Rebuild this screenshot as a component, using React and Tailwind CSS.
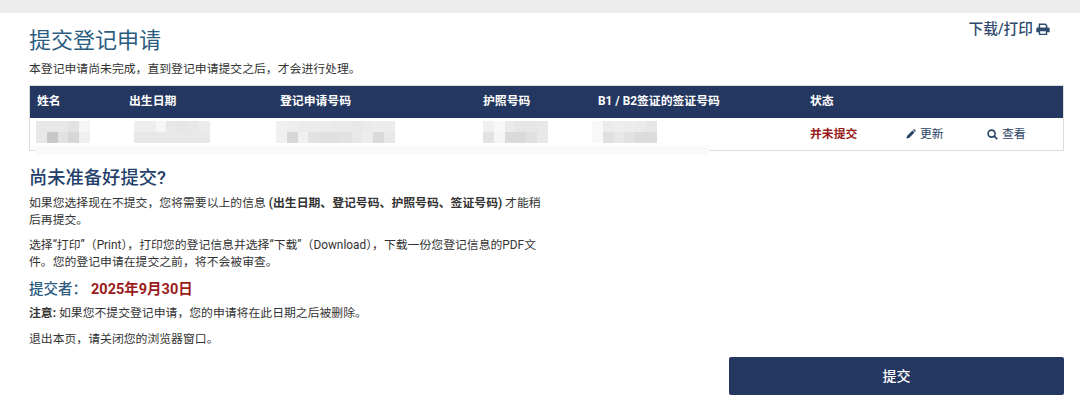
import React from "react";

function Mosaic({ rows, cell = 10.8 }) {
  return (
    <div className="flex flex-col">
      {rows.map((r, i) => (
        <div key={i} className="flex">
          {r.map((c, j) => (
            <div key={j} style={{ width: cell, height: 10.8, background: c }} />
          ))}
        </div>
      ))}
    </div>
  );
}

const PrintIcon = () => (
  <svg width="14" height="13" viewBox="0 0 14 13" fill="none" className="ml-[3px] mt-[1px]">
    <path d="M3.4 5V1.2h5.8L10.6 2.6V5" stroke="#2f4a6d" strokeWidth="1.5" />
    <path fillRule="evenodd" clipRule="evenodd" d="M1.6 4.6h10.8c.7 0 1.3.6 1.3 1.3v3.4H11.2V12H2.8V9.3H.3V5.9c0-.7.6-1.3 1.3-1.3zM4.2 8.2v2.5h5.6V8.2z" fill="#2f4a6d" />
  </svg>
);

const Pencil = () => (
  <svg width="10" height="10" viewBox="0 0 10 10" className="mr-[4px]">
    <path d="M0.4 9.6 1 6.9 6.4 1.5 8.5 3.6 3.1 9zM7 .9 7.6.4c.3-.3.7-.3 1 0l1 1c.3.3.3.7 0 1L9.1 3z" fill="#2a4365" />
  </svg>
);

const Search = () => (
  <svg width="11" height="11" viewBox="0 0 11 11" fill="none" className="mr-[4px]">
    <circle cx="4.6" cy="4.6" r="3.5" stroke="#2a4365" strokeWidth="1.6" />
    <path d="M7.2 7.2 10.2 10.2" stroke="#2a4365" strokeWidth="1.8" />
  </svg>
);

const g = (v) => `rgb(${v},${v},${v})`;
const rowsOf = (a) => a.map((r) => r.map(g));

export default function App() {
  return (
    <div
      className="w-[1080px] h-[419px] overflow-hidden bg-white text-[#333] [text-spacing-trim:space-all]"
      style={{ fontFamily: 'Roboto, "Noto Sans CJK SC", sans-serif' }}
    >
      <div className="h-[13px] bg-[#ececec]" />
      <div className="relative pl-[29px] pr-[16px]">
        <a className="absolute right-[30px] top-[7px] flex items-center text-[14.7px] leading-[18px] font-medium text-[#2f4a6d]">
          下载/打印
          <PrintIcon />
        </a>
        <h1 className="pt-[13px] text-[22px] leading-[30px] font-normal text-[#2b5c7f]">提交登记申请</h1>
        <p className="mt-[5px] text-[11.85px] leading-[16px]">本登记申请尚未完成，直到登记申请提交之后，才会进行处理。</p>

        <div className="relative mt-[8px] w-[1035px] border border-[#dcdcdc]">
          <div className="flex h-[32px] items-center bg-[#243760] pl-[7px] text-[11.85px] font-bold text-white">
            <div className="w-[92px]">姓名</div>
            <div className="w-[151px]">出生日期</div>
            <div className="w-[203px]">登记申请号码</div>
            <div className="w-[115px]">护照号码</div>
            <div className="w-[212px]">B1 / B2签证的签证号码</div>
            <div>状态</div>
          </div>
          <div className="flex h-[32px] items-center pl-[6px] text-[11.85px]">
            <div className="w-[98px] -mt-[4px]">
              <Mosaic rows={rowsOf([[232, 232, 232, 226, 245], [232, 200, 225, 215, 240]])} />
            </div>
            <div className="w-[142px] -mt-[4px]">
              <Mosaic rows={rowsOf([[238, 238, 246, 232, 230, 232, 236], [232, 232, 232, 232, 232, 232, 232]])} />
            </div>
            <div className="w-[207px] -mt-[4px]">
              <Mosaic rows={rowsOf([[240, 238, 236, 236, 236, 234, 234, 232, 234, 236, 236], [240, 215, 240, 226, 224, 224, 226, 232, 236, 218, 232]])} />
            </div>
            <div className="w-[109px] -mt-[4px]">
              <Mosaic rows={rowsOf([[240, 248, 234, 230, 230, 232], [226, 245, 218, 218, 224, 232]])} />
            </div>
            <div className="w-[218px] -mt-[4px]">
              <Mosaic rows={rowsOf([[248, 236, 238, 236, 234, 230], [248, 224, 232, 226, 220, 220]])} />
            </div>
            <div className="w-[96px] pt-[1px] font-bold text-[#9b1c1c]">并未提交</div>
            <div className="flex w-[81px] items-center pt-[1px] text-[#2a4365]"><Pencil />更新</div>
            <div className="flex items-center pt-[1px] text-[#2a4365]"><Search />查看</div>
          </div>
          <div className="absolute left-[5px] top-[59px] h-[10px] w-[675px] bg-[#fafafa]" />
        </div>

        <div className="w-[515px]">
          <h2 className="mt-[14px] text-[18.3px] leading-[26px] font-medium text-[#243f6b]">尚未准备好提交?</h2>
          <p className="mt-[4px] text-[11.85px] leading-[17px]">
            如果您选择现在不提交，您将需要以上的信息 <b>(出生日期、登记号码、护照号码、签证号码)</b> 才能稍后再提交。
          </p>
          <p className="mt-[8px] text-[11.85px] leading-[17px]">
            选择“打印”（Print<span className="[text-spacing-trim:normal]">），</span>打印您的登记信息并选择“下载”（Download<span className="[text-spacing-trim:normal]">），</span>下载一份您登记信息的PDF文件。您的登记申请在提交之前，将不会被审查。
          </p>
          <div className="mt-[9px] flex text-[14.5px] leading-[20px] font-medium text-[#2b5c7f]">
            提交者：<span className="ml-[4px] font-bold text-[#9b1c1c]">2025年9月30日</span>
          </div>
          <p className="mt-[5px] text-[11.85px] leading-[17px]"><b className="font-bold">注意:</b> 如果您不提交登记申请，您的申请将在此日期之后被删除。</p>
          <p className="mt-[9px] text-[11.85px] leading-[17px]">退出本页，请关闭您的浏览器窗口。</p>
        </div>

        <div className="mt-[9px] flex justify-end">
          <button className="h-[38px] w-[335px] rounded-[2px] bg-[#243760] text-[14px] font-medium text-white">提交</button>
        </div>
      </div>
    </div>
  );
}
